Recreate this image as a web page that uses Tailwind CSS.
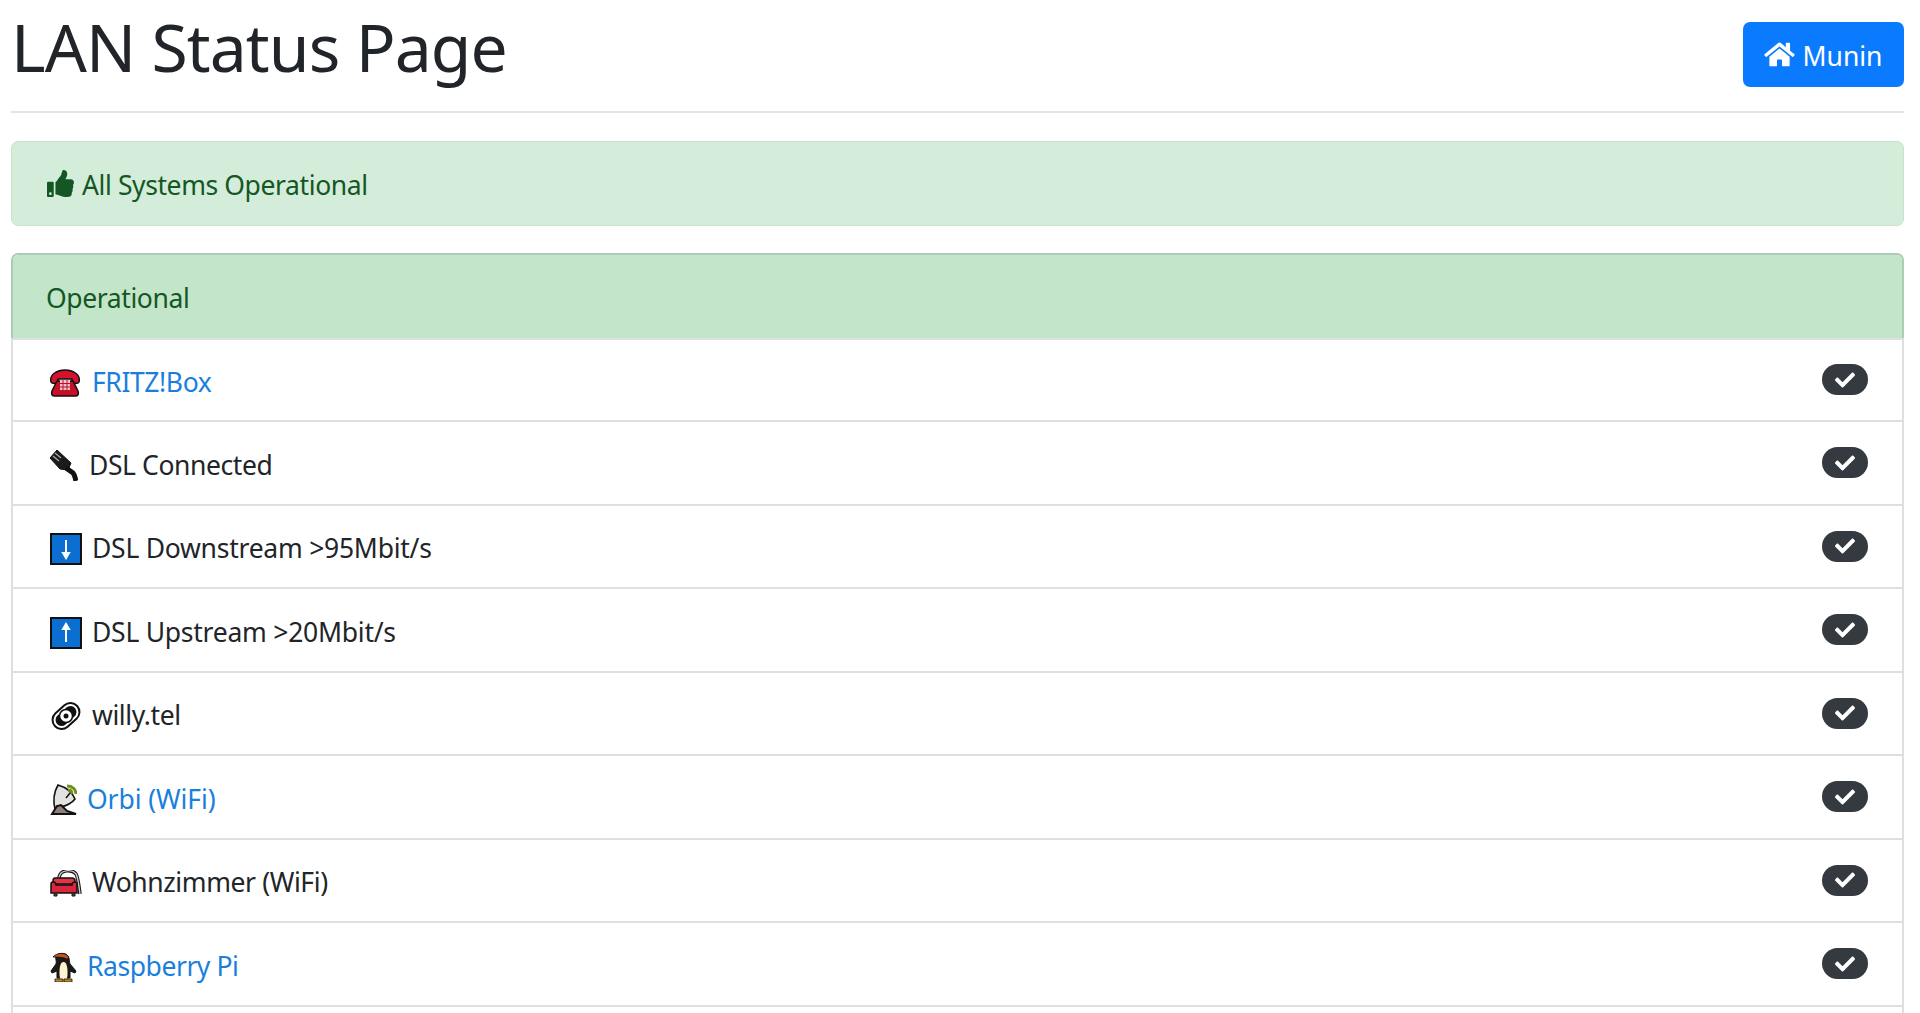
<!DOCTYPE html>
<html lang="en">
<head>
    <meta charset="UTF-8">
    <title>LAN Status Page</title>
    <script src="https://cdn.jsdelivr.net/npm/@tailwindcss/browser@4"></script>
</head>
<body class="bg-white h-screen overflow-hidden font-['Noto_Sans',sans-serif] text-[#212529] text-[26.5px] tracking-[-0.4px]">
    <div class="pl-[11px] pr-[16px]">
        <!-- Header -->
        <div class="flex items-start justify-between h-[113px] border-b-2 border-[#e4e5e6]">
            <h1 class="text-[66px] leading-[92px] font-normal tracking-[-0.9px]">LAN Status Page</h1>
            <a href="#" class="mt-[22px] w-[161px] h-[65px] rounded-[7px] bg-[#0a7bff] text-white flex items-center justify-center gap-[7px] tracking-normal">
                <svg class="w-[31px] h-[27px] fill-white" viewBox="0 0 576 512"><path d="M280.37 148.26L96 300.11V464a16 16 0 0 0 16 16l112.06-.29a16 16 0 0 0 15.92-16V368a16 16 0 0 1 16-16h64a16 16 0 0 1 16 16v95.64a16 16 0 0 0 16 16.05L464 480a16 16 0 0 0 16-16V300L295.67 148.26a12.19 12.19 0 0 0-15.3 0zM571.6 251.47L488 182.56V44.05a12 12 0 0 0-12-12h-56a12 12 0 0 0-12 12v72.61L318.47 43a48 48 0 0 0-61 0L4.34 251.47a12 12 0 0 0-1.6 16.9l25.5 31A12 12 0 0 0 45.15 301l235.22-193.74a12.19 12.19 0 0 1 15.3 0L530.9 301a12 12 0 0 0 16.9-1.6l25.5-31a12 12 0 0 0-1.7-16.93z"/></svg>
                <span class="mt-[5px]">Munin</span>
            </a>
        </div>

        <!-- Alert -->
        <div class="mt-[28px] h-[85px] rounded-[7px] bg-[#d4edda] border border-[#c3e6cb] text-[#155724] flex items-center gap-[8px] px-[35px]">
            <svg class="w-[27px] h-[27px] fill-[#155724]" viewBox="0 0 512 512"><path d="M104 224H24c-13.255 0-24 10.745-24 24v240c0 13.255 10.745 24 24 24h80c13.255 0 24-10.745 24-24V248c0-13.255-10.745-24-24-24zM64 472c-13.255 0-24-10.745-24-24s10.745-24 24-24 24 10.745 24 24-10.745 24-24 24zM384 81.452c0 42.416-25.97 66.208-33.277 94.548h101.723c33.397 0 59.397 27.746 59.553 58.098.084 17.938-7.546 37.249-19.439 49.197l-.11.11c9.836 23.337 8.237 56.037-9.308 79.469 8.681 25.895-.069 57.704-16.382 74.757 4.298 17.598 2.244 32.575-6.148 44.632C440.202 511.587 389.616 512 346.839 512l-2.845-.001c-48.287-.017-87.806-17.598-119.56-31.725-15.957-7.099-36.821-15.887-52.651-16.178-6.54-.12-11.783-5.457-11.783-11.998v-213.77c0-3.2 1.282-6.271 3.558-8.521 39.614-39.144 56.648-80.587 89.117-113.111 14.804-14.832 20.188-37.236 25.393-58.902C282.515 39.293 291.817 0 312 0c24 0 72 8 72 81.452z"/></svg>
            <span class="mt-[5px]">All Systems Operational</span>
        </div>

        <!-- Card -->
        <div class="mt-[27px] rounded-t-[7px] border-2 border-b-0 border-[#dfdfdf] border-t-[#aecbb5] border-x-[#aecbb5]">
            <div class="h-[82.5px] bg-[#c3e6cb] rounded-t-[5px] text-[#155724] flex items-center px-[33px]">
                <span class="mt-[5px]">Operational</span>
            </div>
        </div>
        <ul class="border-x-2 border-[#dfdfdf]">
            <li class="h-[84.5px] border-y-2 border-[#dfdfdf] flex items-center justify-between pl-[36px] pr-[34px]">
                <div class="flex items-center gap-[11px] mt-[6px]">
                    <svg class="w-[32px] h-[28px]" viewBox="0 0 32 28"><path d="M2 13C0 5 9 1 16 1s16 4 14 12c-1 2-6 2-7 0v-3H9v3c-1 2-6 2-7 0z" fill="#d3142c" stroke="#111" stroke-width="1.5"/><path d="M8 12h16l5 10c1 3 0 5-2 5H5c-2 0-3-2-2-5z" fill="#c70f28" stroke="#111" stroke-width="1.5"/><path d="M11 11h10v10H11z" fill="#f6c6cc"/><path d="M14 11v10M18 11v10M11 14.5h10M11 18h10" stroke="#b8102a" stroke-width="1"/></svg>
                    <a href="#" class="text-[#1a7fdc]">FRITZ!Box</a>
                </div>
                <span class="w-[46px] h-[31px] rounded-full bg-[#343a40] flex items-center justify-center"><svg class="w-[20px] h-[20px] fill-white" viewBox="0 0 512 512"><path d="M173.898 439.404l-166.4-166.4c-9.997-9.997-9.997-26.206 0-36.204l36.203-36.204c9.997-9.998 26.207-9.998 36.204 0L192 312.69 432.095 72.596c9.997-9.997 26.207-9.997 36.204 0l36.203 36.204c9.997 9.997 9.997 26.206 0 36.204l-294.4 294.401c-9.998 9.997-26.207 9.997-36.204-.001z"/></svg></span>
            </li>
            <li class="h-[83.5px] border-b-2 border-[#dfdfdf] flex items-center justify-between pl-[37px] pr-[34px]">
                <div class="flex items-center gap-[11px] mt-[6px]">
                    <svg class="w-[28px] h-[31px]" viewBox="0 0 28 31"><path d="M0 8L7 0l14 13-3 7-8-1z" fill="#1b1b1b" stroke="#111"/><path d="M5 3l6 5M3 6l6 5" stroke="#aaa" stroke-width="1.3"/><path d="M16 18l7 5c2 2 2 5 3 8" fill="none" stroke="#111" stroke-width="5"/></svg>
                    <span>DSL Connected</span>
                </div>
                <span class="w-[46px] h-[31px] rounded-full bg-[#343a40] flex items-center justify-center"><svg class="w-[20px] h-[20px] fill-white" viewBox="0 0 512 512"><path d="M173.898 439.404l-166.4-166.4c-9.997-9.997-9.997-26.206 0-36.204l36.203-36.204c9.997-9.998 26.207-9.998 36.204 0L192 312.69 432.095 72.596c9.997-9.997 26.207-9.997 36.204 0l36.203 36.204c9.997 9.997 9.997 26.206 0 36.204l-294.4 294.401c-9.998 9.997-26.207 9.997-36.204-.001z"/></svg></span>
            </li>
            <li class="h-[83.5px] border-b-2 border-[#dfdfdf] flex items-center justify-between pl-[37px] pr-[34px]">
                <div class="flex items-center gap-[10px] mt-[6px]">
                    <svg class="w-[32px] h-[32px]" viewBox="0 0 32 32"><rect x="1" y="1" width="30" height="30" fill="#0a6fd0" stroke="#111" stroke-width="2"/><path d="M16 7v17M13 20l3 5 3-5z" stroke="#fff" stroke-width="2" fill="#fff"/></svg>
                    <span class="tracking-[-0.25px]">DSL Downstream &gt;95Mbit/s</span>
                </div>
                <span class="w-[46px] h-[31px] rounded-full bg-[#343a40] flex items-center justify-center"><svg class="w-[20px] h-[20px] fill-white" viewBox="0 0 512 512"><path d="M173.898 439.404l-166.4-166.4c-9.997-9.997-9.997-26.206 0-36.204l36.203-36.204c9.997-9.998 26.207-9.998 36.204 0L192 312.69 432.095 72.596c9.997-9.997 26.207-9.997 36.204 0l36.203 36.204c9.997 9.997 9.997 26.206 0 36.204l-294.4 294.401c-9.998 9.997-26.207 9.997-36.204-.001z"/></svg></span>
            </li>
            <li class="h-[83.5px] border-b-2 border-[#dfdfdf] flex items-center justify-between pl-[37px] pr-[34px]">
                <div class="flex items-center gap-[10px] mt-[6px]">
                    <svg class="w-[32px] h-[32px]" viewBox="0 0 32 32"><rect x="1" y="1" width="30" height="30" fill="#0a6fd0" stroke="#111" stroke-width="2"/><path d="M16 25V8M13 12l3-5 3 5z" stroke="#fff" stroke-width="2" fill="#fff"/></svg>
                    <span class="tracking-[-0.25px]">DSL Upstream &gt;20Mbit/s</span>
                </div>
                <span class="w-[46px] h-[31px] rounded-full bg-[#343a40] flex items-center justify-center"><svg class="w-[20px] h-[20px] fill-white" viewBox="0 0 512 512"><path d="M173.898 439.404l-166.4-166.4c-9.997-9.997-9.997-26.206 0-36.204l36.203-36.204c9.997-9.998 26.207-9.998 36.204 0L192 312.69 432.095 72.596c9.997-9.997 26.207-9.997 36.204 0l36.203 36.204c9.997 9.997 9.997 26.206 0 36.204l-294.4 294.401c-9.998 9.997-26.207 9.997-36.204-.001z"/></svg></span>
            </li>
            <li class="h-[83.5px] border-b-2 border-[#dfdfdf] flex items-center justify-between pl-[37px] pr-[34px]">
                <div class="flex items-center gap-[10px] mt-[6px]">
                    <svg class="w-[32px] h-[30px]" viewBox="0 0 32 30"><g transform="rotate(-42 16 15)"><rect x="1" y="6" width="30" height="18" rx="9" fill="#fff" stroke="#111" stroke-width="2"/><rect x="4" y="9" width="24" height="12" rx="6" fill="#111"/></g><circle cx="16" cy="15" r="6.5" fill="#fff" stroke="#111" stroke-width="1.5"/><circle cx="16" cy="15" r="2.5" fill="#111"/></svg>
                    <span>willy.tel</span>
                </div>
                <span class="w-[46px] h-[31px] rounded-full bg-[#343a40] flex items-center justify-center"><svg class="w-[20px] h-[20px] fill-white" viewBox="0 0 512 512"><path d="M173.898 439.404l-166.4-166.4c-9.997-9.997-9.997-26.206 0-36.204l36.203-36.204c9.997-9.998 26.207-9.998 36.204 0L192 312.69 432.095 72.596c9.997-9.997 26.207-9.997 36.204 0l36.203 36.204c9.997 9.997 9.997 26.206 0 36.204l-294.4 294.401c-9.998 9.997-26.207 9.997-36.204-.001z"/></svg></span>
            </li>
            <li class="h-[83.5px] border-b-2 border-[#dfdfdf] flex items-center justify-between pl-[37px] pr-[34px]">
                <div class="flex items-center gap-[10px] mt-[6px]">
                    <svg class="w-[27px] h-[31px]" viewBox="0 0 27 31"><path d="M8 1c7 2 14 7 17 14-3 4-9 7-15 8L5 25C3 17 4 8 8 1z" fill="#e4e1e1" stroke="#111" stroke-width="1.6"/><path d="M7 22L2 30h24l-9-3-6-6z" fill="#8e7f7a" stroke="#111" stroke-width="2"/><path d="M17 2c5 0 9 3 9 8M18 6c2 0 4 1 4 4" fill="none" stroke="#6f8f1e" stroke-width="2.8"/><path d="M20 9l-4 5" stroke="#111" stroke-width="1.5"/></svg>
                    <a href="#" class="text-[#1a7fdc] tracking-[-0.1px]">Orbi (WiFi)</a>
                </div>
                <span class="w-[46px] h-[31px] rounded-full bg-[#343a40] flex items-center justify-center"><svg class="w-[20px] h-[20px] fill-white" viewBox="0 0 512 512"><path d="M173.898 439.404l-166.4-166.4c-9.997-9.997-9.997-26.206 0-36.204l36.203-36.204c9.997-9.998 26.207-9.998 36.204 0L192 312.69 432.095 72.596c9.997-9.997 26.207-9.997 36.204 0l36.203 36.204c9.997 9.997 9.997 26.206 0 36.204l-294.4 294.401c-9.998 9.997-26.207 9.997-36.204-.001z"/></svg></span>
            </li>
            <li class="h-[83.5px] border-b-2 border-[#dfdfdf] flex items-center justify-between pl-[37px] pr-[34px]">
                <div class="flex items-center gap-[10px] mt-[6px]">
                    <svg class="w-[32px] h-[27px]" viewBox="0 0 32 27"><path d="M9 9C9 -1 22 -1 26 4c2 3 3 13 4 20" fill="none" stroke="#111" stroke-width="3.5"/><path d="M9 9C9 -1 22 -1 26 4c2 3 3 13 4 20" fill="none" stroke="#c9c9c9" stroke-width="1.4"/><path d="M5 8h17c2 0 3 1 3 3v3H3v-3c0-2 1-3 2-3z" fill="#e23349" stroke="#111" stroke-width="1.5"/><path d="M1 14c0-1 1-2 2-2 2 0 3 1 3 3h16c0-2 1-3 3-3 1 0 2 1 2 2v9H1z" fill="#d9263c" stroke="#111" stroke-width="1.5"/><path d="M4 24h3v2H4zM22 24h3v2h-3z" fill="#666" stroke="#111"/></svg>
                    <span>Wohnzimmer (WiFi)</span>
                </div>
                <span class="w-[46px] h-[31px] rounded-full bg-[#343a40] flex items-center justify-center"><svg class="w-[20px] h-[20px] fill-white" viewBox="0 0 512 512"><path d="M173.898 439.404l-166.4-166.4c-9.997-9.997-9.997-26.206 0-36.204l36.203-36.204c9.997-9.998 26.207-9.998 36.204 0L192 312.69 432.095 72.596c9.997-9.997 26.207-9.997 36.204 0l36.203 36.204c9.997 9.997 9.997 26.206 0 36.204l-294.4 294.401c-9.998 9.997-26.207 9.997-36.204-.001z"/></svg></span>
            </li>
            <li class="h-[83.5px] border-b-2 border-[#dfdfdf] flex items-center justify-between pl-[37px] pr-[34px]">
                <div class="flex items-center gap-[10px] mt-[6px]">
                    <svg class="w-[27px] h-[30px]" viewBox="0 0 27 30"><path d="M6 4c2-3 9-4 12 0 2 3 1 6 2 8l6 7-1 2-5-2v7H7v-7l-5 2-1-2 5-7c1-3-1-5 0-8z" fill="#1c1a18" stroke="#111"/><path d="M13.5 10c3 0 4 5 4 10 0 3 0 5-1 7h-6c-1-2-1-4-1-7 0-5 1-10 4-10z" fill="#fdf3cf"/><path d="M3 5c3-4 11-5 15-1 1 2 0 3-1 3-4-2-9-2-14-2z" fill="#c8561c" stroke="#111" stroke-width=".8"/><path d="M5 27h8v3H5zM14 27h8v3h-8z" fill="#c8891c" stroke="#111" stroke-width=".8"/></svg>
                    <a href="#" class="text-[#1a7fdc] tracking-[-0.45px]">Raspberry Pi</a>
                </div>
                <span class="w-[46px] h-[31px] rounded-full bg-[#343a40] flex items-center justify-center"><svg class="w-[20px] h-[20px] fill-white" viewBox="0 0 512 512"><path d="M173.898 439.404l-166.4-166.4c-9.997-9.997-9.997-26.206 0-36.204l36.203-36.204c9.997-9.998 26.207-9.998 36.204 0L192 312.69 432.095 72.596c9.997-9.997 26.207-9.997 36.204 0l36.203 36.204c9.997 9.997 9.997 26.206 0 36.204l-294.4 294.401c-9.998 9.997-26.207 9.997-36.204-.001z"/></svg></span>
            </li>
            <li class="h-[83.5px]"></li>
        </ul>
    </div>
</body>
</html>
